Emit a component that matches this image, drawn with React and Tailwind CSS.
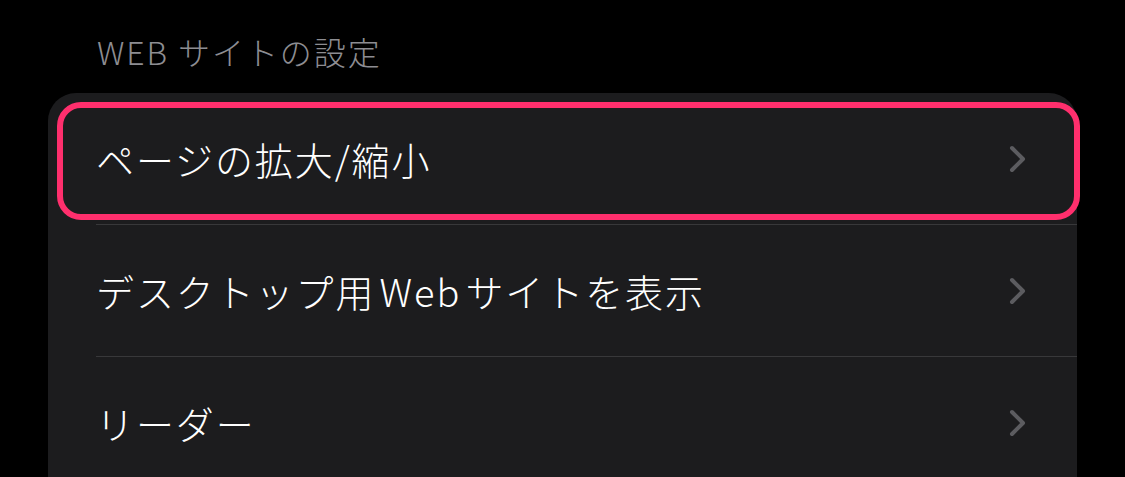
const rows = ['ページの拡大/縮小', 'デスクトップ用\u200AWeb\u200Aサイトを表示', 'リーダー'];

const Chevron = () => (
  <svg width="17" height="28" viewBox="0 0 17 28" fill="none">
    <polyline
      points="3,3 14,14 3,25"
      stroke="#5c5c60"
      strokeWidth="4"
      strokeLinecap="round"
      strokeLinejoin="round"
    />
  </svg>
);

export default function App() {
  return (
    <div
      className="h-screen w-full bg-black overflow-hidden"
      style={{ fontFamily: '"Noto Sans CJK JP", "Noto Sans", sans-serif' }}
    >
      {/* Section header */}
      <div className="h-[93px] pl-[97px] pt-[35px]">
        <h2 className="text-[32px] leading-[32px] text-[#8d8d92] font-light tracking-[0.06em]">WEB サイトの設定</h2>
      </div>

      {/* Grouped list */}
      <div className="relative mx-[48px] rounded-[28px] bg-[#1c1c1e] pb-[60px]">
        {rows.map((label, i) => (
          <div key={label}>
            {i > 0 && <div className="ml-[48px] h-px bg-[#38383a]" />}
            <div className="flex h-[131px] items-center justify-between pl-[48px] pr-[51px]">
              <span className="text-[38px] leading-[38px] text-white font-light tracking-[0.05em]">{label}</span>
              <Chevron />
            </div>
          </div>
        ))}

        {/* Highlight annotation */}
        <div className="pointer-events-none absolute left-[9px] top-[9px] -right-[3px] h-[118px] rounded-[24px] border-[6px] border-[#ff2f6d]" />
      </div>
    </div>
  );
}
